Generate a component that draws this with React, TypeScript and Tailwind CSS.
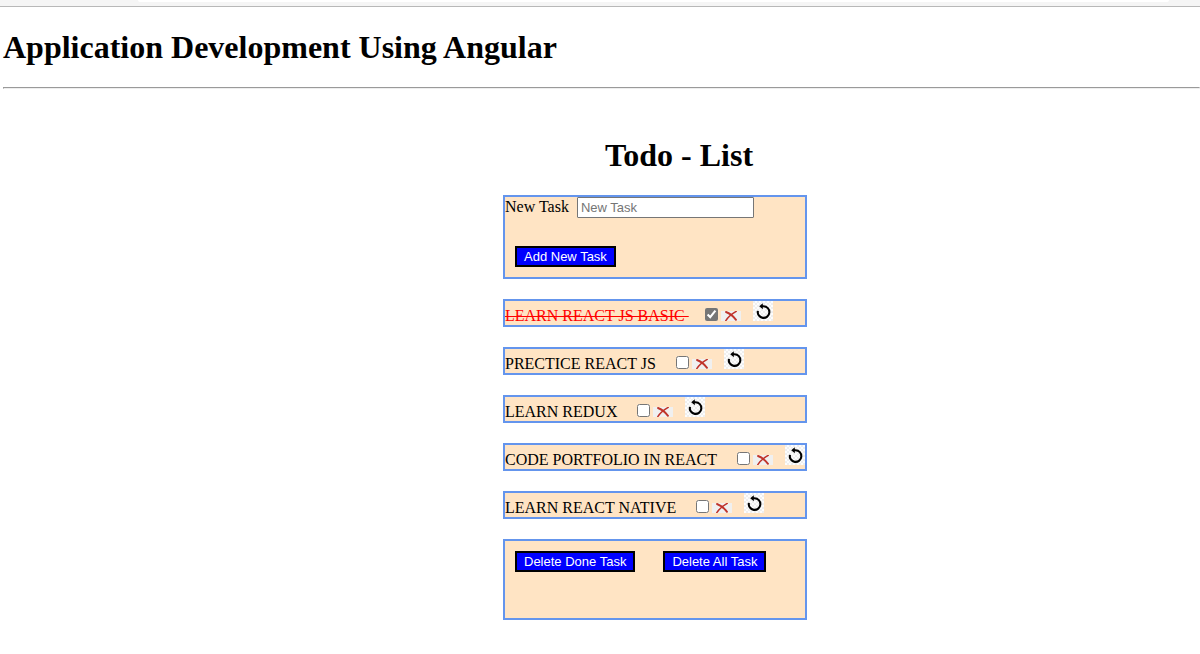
import { useState, type FormEvent } from 'react';

type Task = { id: number; title: string; done: boolean };

const initialTasks: Task[] = [
  { id: 1, title: 'LEARN REACT JS BASIC', done: true },
  { id: 2, title: 'PRECTICE REACT JS', done: false },
  { id: 3, title: 'LEARN REDUX', done: false },
  { id: 4, title: 'CODE PORTFOLIO IN REACT', done: false },
  { id: 5, title: 'LEARN REACT NATIVE', done: false },
];

const panel = 'border-2 border-[#6495ed] bg-[#ffe4c4]';
const action =
  'h-[21px] border-2 border-black bg-[#0000ff] px-[7px] font-["Liberation_Sans",sans-serif] text-[13px] leading-[17px] text-white';

function CrossIcon() {
  return (
    <svg className="block" width="20" height="10" viewBox="0 0 20 10" aria-hidden="true">
      <rect width="20" height="10" fill="#f0f0f0" />
      <path d="M5 1C8.4 2.2 12.4 5.4 15 8.8" fill="none" stroke="#c0352c" strokeWidth="1.9" strokeLinecap="round" />
      <path d="M15.2 0.4C11.6 2.4 7.4 5.6 4.8 9.6" fill="none" stroke="#bf3129" strokeWidth="1.5" strokeLinecap="round" />
    </svg>
  );
}

function ResetIcon() {
  return (
    <svg className="block" width="20" height="20" viewBox="0 0 20 20" aria-hidden="true">
      <defs>
        <pattern id="checker" width="4" height="4" patternUnits="userSpaceOnUse">
          <rect width="4" height="4" fill="#fdfdfd" />
          <rect width="2" height="2" fill="#efefef" />
          <rect x="2" y="2" width="2" height="2" fill="#efefef" />
        </pattern>
      </defs>
      <rect width="20" height="20" fill="url(#checker)" />
      <path d="M8.5 5.3H10.6A5.8 5.8 0 1 1 4.9 9.9" fill="none" stroke="#000" strokeWidth="2.1" />
      <path d="M9.8 2.3V8.3L6.2 5.3Z" fill="#000" />
    </svg>
  );
}

export default function App() {
  const [tasks, setTasks] = useState<Task[]>(initialTasks);
  const [title, setTitle] = useState('');

  const addTask = (event: FormEvent) => {
    event.preventDefault();
    const name = title.trim();
    if (!name) return;
    setTasks([...tasks, { id: Date.now(), title: name.toUpperCase(), done: false }]);
    setTitle('');
  };

  const setDone = (id: number, done: boolean) =>
    setTasks(tasks.map((task) => (task.id === id ? { ...task, done } : task)));

  return (
    <div className='bg-white font-["Liberation_Serif",serif] text-base leading-[18px] text-black'>
      <div className="h-[7px] border-b border-[#b8b8b8] bg-[#f5f5f5] pr-[31px] pl-[138px]">
        <div className="h-[2px] rounded-b-sm bg-white" />
      </div>

      <header className="pt-[22px] pl-[3px]">
        <h1 className="text-[32px] leading-[37px] font-bold">Application Development Using Angular</h1>
        <hr className="mt-[21px] h-[2px] border border-t-[#9a9a9a] border-r-[#eeeeee] border-b-[#eeeeee] border-l-[#9a9a9a]" />
      </header>

      <main className="flex justify-center pt-12 pl-[110px]">
        <div className="flex w-[304px] flex-col gap-5">
          <h2 className="pb-px pl-12 text-center text-[32px] leading-[37px] font-bold">Todo - List</h2>

          <form className={panel} onSubmit={addTask}>
            <div className="flex items-start gap-2">
              <label htmlFor="new-task" className="pt-px">
                New Task
              </label>
              <input
                id="new-task"
                type="text"
                placeholder="New Task"
                value={title}
                onChange={(event) => setTitle(event.target.value)}
                className='h-[21px] w-[177px] rounded-[1px] border border-[#767676] bg-white px-[3px] font-["Liberation_Sans",sans-serif] text-[13px] placeholder:text-[#757575]'
              />
            </div>
            <div className="flex px-[10px] pt-7 pb-[10px]">
              <button type="submit" className={action}>
                Add New Task
              </button>
            </div>
          </form>

          <ul className="flex flex-col gap-5">
            {tasks.map((task) => (
              <li key={task.id} className={`${panel} flex min-h-7 items-end`}>
                <label
                  htmlFor={`task-${task.id}`}
                  className={task.done ? 'whitespace-pre text-[#ff0000] line-through' : 'whitespace-pre'}
                >
                  {`${task.title} `}
                </label>
                <input
                  id={`task-${task.id}`}
                  type="checkbox"
                  checked={task.done}
                  onChange={(event) => setDone(task.id, event.target.checked)}
                  className="mb-1 ml-4 size-[13px] shrink-0 accent-[#767676]"
                />
                <button
                  type="button"
                  aria-label={`Delete ${task.title}`}
                  onClick={() => setTasks(tasks.filter((item) => item.id !== task.id))}
                  className="mb-1 ml-[3px] shrink-0"
                >
                  <CrossIcon />
                </button>
                <button
                  type="button"
                  aria-label={`Reset ${task.title}`}
                  onClick={() => setDone(task.id, false)}
                  className="mb-1 ml-3 shrink-0"
                >
                  <ResetIcon />
                </button>
              </li>
            ))}
          </ul>

          <div className={`${panel} flex gap-7 px-[10px] pt-[10px] pb-[46px]`}>
            <button type="button" className={action} onClick={() => setTasks(tasks.filter((task) => !task.done))}>
              Delete Done Task
            </button>
            <button type="button" className={action} onClick={() => setTasks([])}>
              Delete All Task
            </button>
          </div>
        </div>
      </main>
    </div>
  );
}
